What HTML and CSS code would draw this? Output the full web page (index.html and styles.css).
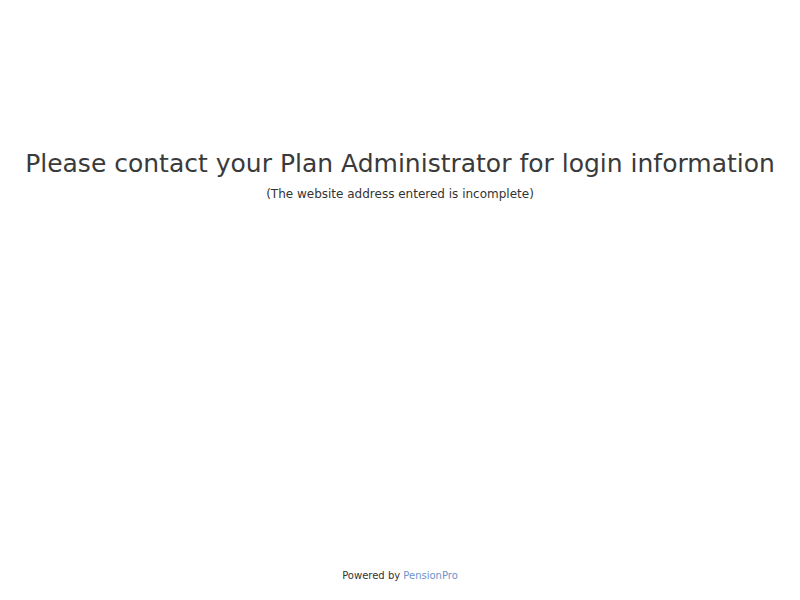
FILE: index.html
```html
<!DOCTYPE html>
<html>
<head>
<meta charset="utf-8">
<link rel="stylesheet" href="styles.css">
</head>
<body>
<div class="page">
  <main class="message">
    <h1 class="title">Please contact your Plan Administrator for login information</h1>
    <p class="subtitle">(The website address entered is incomplete)</p>
  </main>
  <footer class="footer">Powered by <a class="brand" href="#">PensionPro</a></footer>
</div>
</body>
</html>
```
FILE: styles.css
```css
html, body {
  margin: 0;
  padding: 0;
  background: #fff;
}
body {
  font-family: "DejaVu Sans", Verdana, sans-serif;
  color: #333;
}
.page {
  height: 600px;
  display: flex;
  flex-direction: column;
  align-items: center;
}
.message {
  padding-top: 148px;
  text-align: center;
  flex: 1;
}
.title {
  margin: 0 0 6px;
  font-size: 25px;
  font-weight: normal;
  line-height: 32px;
  color: #3a3a3a;
}
.subtitle {
  margin: 0;
  font-size: 12px;
  line-height: 16px;
  color: #333;
}
.footer {
  font-size: 10px;
  line-height: 14px;
  padding-bottom: 17px;
  color: #333;
}
.brand {
  color: #6b93cc;
  text-decoration: none;
}
```
